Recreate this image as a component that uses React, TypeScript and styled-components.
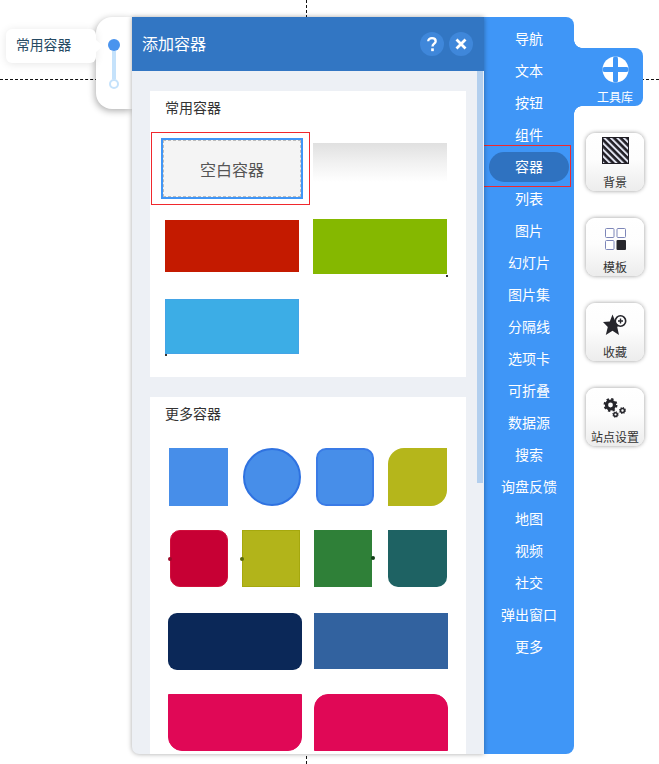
import React from "react";
import styled, { createGlobalStyle, css } from "styled-components";

const Global = createGlobalStyle`
  html, body { margin: 0; padding: 0; background: #fff; }
  body { font-family: "Noto Sans CJK SC", "Noto Sans", sans-serif; }
  * { box-sizing: border-box; }
`;

const BLUE = "#3f96f7";

const Stage = styled.div`
  position: relative;
  width: 659px;
  height: 764px;
  overflow: hidden;
  display: flex;
  align-items: flex-start;
  padding-top: 17px;
`;

const HGuide = styled.div`
  position: absolute;
  left: 0;
  right: 0;
  top: 79px;
  border-top: 1px dashed #111;
`;

const VGuide = styled.div`
  position: absolute;
  top: 0;
  bottom: 0;
  left: 306px;
  border-left: 1px dashed #111;
`;

const LeftRail = styled.div`
  position: relative;
  width: 132px;
  flex: none;
  display: flex;
  justify-content: flex-end;
  align-items: flex-start;
`;

const Tip = styled.div`
  position: relative;
  z-index: 2;
  width: 90px;
  height: 34px;
  margin-top: 12px;
  padding-left: 10px;
  background: #fff;
  border-radius: 6px;
  box-shadow: 0 1px 8px rgba(0, 0, 0, 0.1);
  font-size: 13.8px;
  line-height: 31px;
  color: #264a63;
  &::after {
    content: "";
    position: absolute;
    right: -7px;
    top: 10px;
    border-left: 8px solid #fff;
    border-top: 7px solid transparent;
    border-bottom: 7px solid transparent;
  }
`;

const Stepper = styled.div`
  width: 36px;
  height: 92px;
  padding-top: 22px;
  display: flex;
  flex-direction: column;
  align-items: center;
  background: #fff;
  border-radius: 16px 0 0 16px;
  box-shadow: -1px 2px 7px rgba(0, 0, 0, 0.32);
`;

const StepDot = styled.span`
  width: 12px;
  height: 12px;
  flex: none;
  border-radius: 50%;
  background: #4a94ee;
`;

const StepLine = styled.span`
  width: 4px;
  height: 28px;
  flex: none;
  background: #c5e2fb;
`;

const StepRing = styled.span`
  width: 10px;
  height: 10px;
  flex: none;
  border-radius: 50%;
  background: #fff;
  border: 2px solid #c5e2fb;
`;

const Panel = styled.section`
  position: relative;
  z-index: 3;
  width: 352px;
  height: 737px;
  flex: none;
  overflow: hidden;
  background: #edf0f5;
  border-radius: 0 0 0 7px;
  box-shadow: 0 0 5px rgba(0, 0, 0, 0.35);
`;

const PanelHeader = styled.header`
  height: 54px;
  display: flex;
  align-items: center;
  gap: 5px;
  padding: 0 11px 0 10px;
  background: #3276c3;
  color: #fff;
`;

const PanelTitle = styled.h1`
  flex: 1;
  margin: 0;
  padding-bottom: 3px;
  font-size: 16px;
  font-weight: 400;
`;

const RoundBtn = styled.button`
  width: 24px;
  height: 24px;
  padding: 0;
  border: 0;
  border-radius: 50%;
  display: flex;
  align-items: center;
  justify-content: center;
  background: #3f87da;
  color: #fff;
`;

const ScrollThumb = styled.div`
  position: absolute;
  left: 345px;
  top: 54px;
  width: 6px;
  height: 412px;
  background: #b3cfee;
`;

const PanelBody = styled.div`
  display: flex;
  flex-direction: column;
  gap: 20px;
  padding: 20px 18px 0;
`;

const Section = styled.div`
  background: #fff;
  padding-bottom: ${(p: { $pb: number }) => p.$pb}px;
`;

const SectionTitle = styled.h2`
  margin: 0;
  height: 34px;
  padding-left: 15px;
  font-size: 14px;
  font-weight: 400;
  line-height: 32px;
  color: #333;
`;

const CommonGrid = styled.div`
  display: grid;
  grid-template-columns: 134px 134px;
  grid-template-rows: 81px 79px 55px;
  column-gap: 14px;
  margin: 13px 0 0 15px;
`;

const BlankTile = styled.div`
  position: relative;
  width: 142px;
  height: 61px;
  margin-left: -4px;
  display: flex;
  align-items: center;
  justify-content: center;
  background: #f4f4f4;
  border: 2px solid #3f96f7;
  outline: 1px dashed #bbb;
  outline-offset: -3px;
  font-size: 16px;
  color: #555;
`;

const Annotation = styled.span`
  position: absolute;
  border: 1px solid #f0282d;
  pointer-events: none;
  ${(p: { $l: number; $t: number; $r: number; $b: number }) => css`
    left: ${p.$l}px;
    top: ${p.$t}px;
    right: ${p.$r}px;
    bottom: ${p.$b}px;
  `}
`;

const GradientTile = styled.div`
  height: 39px;
  margin-top: 5px;
  background: linear-gradient(#e0e0e0, #f1f1f1 50%, #fff);
`;

const FlatTile = styled.div<{ $bg: string; $edge: string; $top: number; $h: number; $bw?: string; $tick?: "br" | "bl" }>`
  position: relative;
  height: ${(p) => p.$h}px;
  margin-top: ${(p) => p.$top}px;
  background: ${(p) => p.$bg};
  border: ${(p) => p.$bw ?? "1px"} solid ${(p) => p.$edge};
  ${(p) =>
    p.$tick &&
    css`
      &::after {
        content: "";
        position: absolute;
        bottom: -3px;
        ${p.$tick === "br" ? "right: -1px;" : "left: -1px;"}
        width: 2px;
        height: 2px;
        background: #333;
      }
    `}
`;

const MoreGrid = styled.div`
  display: grid;
  grid-template-columns: 73px 73px 72px 72px;
  grid-auto-rows: 58px;
  row-gap: 24px;
  margin: 17px 0 0 19px;
`;

const WideGrid = styled.div`
  display: grid;
  grid-template-columns: 134px 134px;
  grid-auto-rows: 56px;
  column-gap: 12px;
  row-gap: 25px;
  margin: 25px 0 0 18px;
`;

const Shape = styled.div<{
  $bg: string;
  $edge: string;
  $radius: string;
  $w?: number;
  $h?: number;
  $ml?: number;
  $bw?: string;
  $nub?: "l" | "r";
  $nubColor?: string;
}>`
  position: relative;
  width: ${(p) => p.$w ?? 58}px;
  height: ${(p) => p.$h ?? 58}px;
  margin-left: ${(p) => p.$ml ?? 0}px;
  background: ${(p) => p.$bg};
  border: ${(p) => p.$bw ?? "1px"} solid ${(p) => p.$edge};
  border-radius: ${(p) => p.$radius};
  ${(p) =>
    p.$nub &&
    css`
      &::after {
        content: "";
        position: absolute;
        top: 26px;
        ${p.$nub === "l" ? "left: -3px;" : "right: -3px;"}
        width: 4px;
        height: 4px;
        border-radius: 50%;
        background: ${p.$nubColor};
      }
    `}
`;

const Nav = styled.nav`
  position: relative;
  z-index: 2;
  width: 90px;
  height: 737px;
  flex: none;
  padding-top: 5px;
  background: ${BLUE};
  border-radius: 0 8px 8px 0;
`;

const NavItem = styled.div`
  height: 32px;
  display: flex;
  align-items: center;
  justify-content: center;
  font-size: 14px;
  color: #fff;
`;

const NavPill = styled.span`
  position: relative;
  width: 80px;
  height: 30px;
  margin-top: 2px;
  padding-bottom: 2px;
  display: flex;
  align-items: center;
  justify-content: center;
  border-radius: 15px;
  background: #2f72c0;
`;

const Side = styled.div`
  width: 85px;
  flex: none;
  display: flex;
  flex-direction: column;
  align-items: flex-start;
  padding-top: 31px;
`;

const ToolTab = styled.div`
  position: relative;
  width: 69px;
  height: 58px;
  display: flex;
  flex-direction: column;
  align-items: center;
  gap: 5px;
  padding: 8px 0 0 13px;
  background: ${BLUE};
  border-radius: 0 8px 8px 0;
  font-size: 12px;
  line-height: 17px;
  color: #fff;
  &::before, &::after {
    content: "";
    position: absolute;
    left: 0;
    width: 8px;
    height: 8px;
  }
  &::before {
    top: -8px;
    background: radial-gradient(circle at top right, transparent 7.5px, ${BLUE} 8px);
  }
  &::after {
    bottom: -8px;
    background: radial-gradient(circle at bottom right, transparent 7.5px, ${BLUE} 8px);
  }
`;

const ToolList = styled.div`
  display: flex;
  flex-direction: column;
  gap: 27px;
  margin: 27px 0 0 12px;
`;

const ToolCard = styled.div`
  width: 58px;
  height: 58px;
  display: flex;
  flex-direction: column;
  align-items: center;
  border-radius: 9px;
  background: linear-gradient(#fff, #fdfdfd 45%, #ececec);
  box-shadow: 0 0 4px rgba(0, 0, 0, 0.4);
  font-size: 12px;
  color: #333;
`;

const ToolIcon = styled.div<{ $pt: number }>`
  height: 40px;
  width: 100%;
  flex: none;
  display: flex;
  align-items: flex-start;
  justify-content: center;
  padding-top: ${(p) => p.$pt}px;
  & > svg { display: block; }
`;

const ToolLabel = styled.span`
  line-height: 17px;
  white-space: nowrap;
`;

const NAV = ["导航", "文本", "按钮", "组件", "容器", "列表", "图片", "幻灯片", "图片集", "分隔线", "选项卡", "可折叠", "数据源", "搜索", "询盘反馈", "地图", "视频", "社交", "弹出窗口", "更多"];

const PlusCircle = () => (
  <svg width="27" height="27" viewBox="0 0 27 27">
    <circle cx="13.5" cy="13.5" r="13" fill="#fff" />
    <rect x="11" y="0.5" width="5" height="26" rx="2" fill={BLUE} />
    <rect x="0.5" y="11" width="26" height="5" rx="2" fill={BLUE} />
  </svg>
);

const QuestionIcon = () => (
  <svg width="10" height="15" viewBox="0 0 12 18">
    <path d="M1.5 5 C1.5 2.4 3.5 1.4 6 1.4 C8.6 1.4 10.4 2.8 10.4 5 C10.4 8 6.6 8 6.6 11.4" fill="none" stroke="#fff" strokeWidth="2.8" />
    <rect x="5" y="13.6" width="3.2" height="3.4" fill="#fff" />
  </svg>
);

const CloseIcon = () => (
  <svg width="12" height="12" viewBox="0 0 12 12">
    <path d="M1.5 1.5L10.5 10.5M10.5 1.5L1.5 10.5" stroke="#fff" strokeWidth="2.8" />
  </svg>
);

const Hatch = () => (
  <svg width="27" height="27" viewBox="0 0 27 27">
    <defs>
      <pattern id="hatch" width="4.6" height="4.6" patternUnits="userSpaceOnUse" patternTransform="rotate(45)">
        <rect width="4.6" height="4.6" fill="#e2e4f0" />
        <rect width="4.6" height="2.6" fill="#1f1d24" />
      </pattern>
    </defs>
    <rect x="0.5" y="0.5" width="26" height="26" fill="url(#hatch)" stroke="#1f1d24" />
  </svg>
);

const Blocks = () => (
  <svg width="21" height="22" viewBox="0 0 21 22">
    <rect x="0.5" y="0.5" width="8.5" height="9" rx="1" fill="#fff" stroke="#7d86b8" />
    <rect x="12" y="0.5" width="8.5" height="9" rx="1" fill="#fff" stroke="#7d86b8" />
    <rect x="0.5" y="12.5" width="8.5" height="9" rx="1" fill="#fff" stroke="#7d86b8" />
    <rect x="11.5" y="12" width="9.5" height="10" rx="1" fill="#26262c" />
  </svg>
);

const StarPlus = () => (
  <svg width="24" height="22" viewBox="0 0 24 22">
    <path d="M9.5 0.5 L12.4 7.5 L19.5 8 L14.2 12.9 L16 21 L9.5 16.7 L2.8 21 L4.8 12.9 L0 8.1 L6.8 7.5 Z" fill="#26262c" />
    <circle cx="17.5" cy="7" r="5.2" fill="#fff" stroke="#26262c" strokeWidth="1.6" />
    <path d="M15 7h5M17.5 4.5v5" stroke="#26262c" strokeWidth="1.4" />
  </svg>
);

const Gear = ({ x, y, r, w }: { x: number; y: number; r: number; w: number }) => {
  const toothR = r + w * 0.55;
  const c = 2 * Math.PI * toothR;
  return (
    <g fill="none" stroke="#26262c">
      <circle cx={x} cy={y} r={r} strokeWidth={w} />
      <circle cx={x} cy={y} r={toothR} strokeWidth={w * 0.75} strokeDasharray={`${c / 16} ${c / 16}`} />
    </g>
  );
};

const Gears = () => (
  <svg width="24" height="21" viewBox="0 0 24 21">
    <Gear x={7.5} y={8} r={4} w={3.2} />
    <Gear x={19.5} y={13.5} r={2} w={1.6} />
    <Gear x={12.5} y={17.5} r={1.8} w={1.5} />
  </svg>
);

export default function App() {
  return (
    <Stage>
      <Global />
      <HGuide />
      <VGuide />
      <LeftRail>
        <Tip>常用容器</Tip>
        <Stepper>
          <StepDot />
          <StepLine />
          <StepRing />
        </Stepper>
      </LeftRail>
      <Panel>
        <PanelHeader>
          <PanelTitle>添加容器</PanelTitle>
          <RoundBtn aria-label="帮助"><QuestionIcon /></RoundBtn>
          <RoundBtn aria-label="关闭"><CloseIcon /></RoundBtn>
        </PanelHeader>
        <ScrollThumb />
        <PanelBody>
          <Section $pb={24}>
            <SectionTitle>常用容器</SectionTitle>
            <CommonGrid>
              <BlankTile>
                空白容器
                <Annotation $l={-12} $t={-8} $r={-9} $b={-8} />
              </BlankTile>
              <GradientTile />
              <FlatTile $bg="#c41a00" $edge="#cfa59c" $top={1} $h={52} $bw="1px 1px 0 1px" />
              <FlatTile $bg="#85b800" $edge="#74a204" $top={0} $h={55} $bw="2px 1px 2px 1px" $tick="br" />
              <FlatTile $bg="#3cade6" $edge="#43a4e6" $top={1} $h={55} $tick="bl" />
            </CommonGrid>
          </Section>
          <Section $pb={20}>
            <SectionTitle>更多容器</SectionTitle>
            <MoreGrid>
              <Shape $bg="#478ee9" $edge="#2f74e2" $radius="0" $w={59} $bw="0 2px 2px 0" />
              <Shape $bg="#478ee9" $edge="#2f72e0" $radius="50%" $ml={1} $bw="2px" />
              <Shape $bg="#478ee9" $edge="#3a7be6" $radius="10px" $ml={1} $bw="2px" />
              <Shape $bg="#b5b61b" $edge="#abad0c" $radius="16px 0 16px 0" $w={59} $ml={1} $bw="1px 1px 2px 1px" />
              <Shape $bg="#c70034" $edge="#d0103c" $radius="10px" $ml={1} $h={57} $nub="l" $nubColor="#9c0a2a" />
              <Shape $bg="#b2b41a" $edge="#a5a80e" $radius="0" $h={57} $ml={0} $nub="l" $nubColor="#5c6a0c" />
              <Shape $bg="#2f8038" $edge="#155f1c" $radius="0" $h={57} $ml={-1} $bw="2px 1px 2px 1px" $nub="r" $nubColor="#123f18" />
              <Shape $bg="#1e6263" $edge="#124a4c" $radius="0 0 10px 10px" $h={57} $w={59} $ml={1} $bw="2px 1px 2px 1px" />
            </MoreGrid>
            <WideGrid>
              <Shape $bg="#0b2858" $edge="#05163a" $radius="9px" $h={57} $w={134} $bw="1px 1px 2px 1px" />
              <Shape $bg="#32629f" $edge="#1f4a8a" $radius="0" $h={56} $w={134} $bw="0 0 2px 0" />
              <Shape $bg="#e00856" $edge="#e00856" $radius="0 0 14px 14px" $h={57} $w={134} />
              <Shape $bg="#e00856" $edge="#e00856" $radius="14px 14px 0 0" $h={57} $w={134} />
            </WideGrid>
          </Section>
        </PanelBody>
      </Panel>
      <Nav>
        {NAV.map((n) => (
          <NavItem key={n}>
            {n === "容器" ? (
              <NavPill>
                {n}
                <Annotation $l={-6} $t={-7} $r={-2} $b={-5} />
              </NavPill>
            ) : (
              n
            )}
          </NavItem>
        ))}
      </Nav>
      <Side>
        <ToolTab>
          <PlusCircle />
          <span>工具库</span>
        </ToolTab>
        <ToolList>
          <ToolCard>
            <ToolIcon $pt={4}><Hatch /></ToolIcon>
            <ToolLabel>背景</ToolLabel>
          </ToolCard>
          <ToolCard>
            <ToolIcon $pt={10}><Blocks /></ToolIcon>
            <ToolLabel>模板</ToolLabel>
          </ToolCard>
          <ToolCard>
            <ToolIcon $pt={11}><StarPlus /></ToolIcon>
            <ToolLabel>收藏</ToolLabel>
          </ToolCard>
          <ToolCard>
            <ToolIcon $pt={9}><Gears /></ToolIcon>
            <ToolLabel>站点设置</ToolLabel>
          </ToolCard>
        </ToolList>
      </Side>
    </Stage>
  );
}
